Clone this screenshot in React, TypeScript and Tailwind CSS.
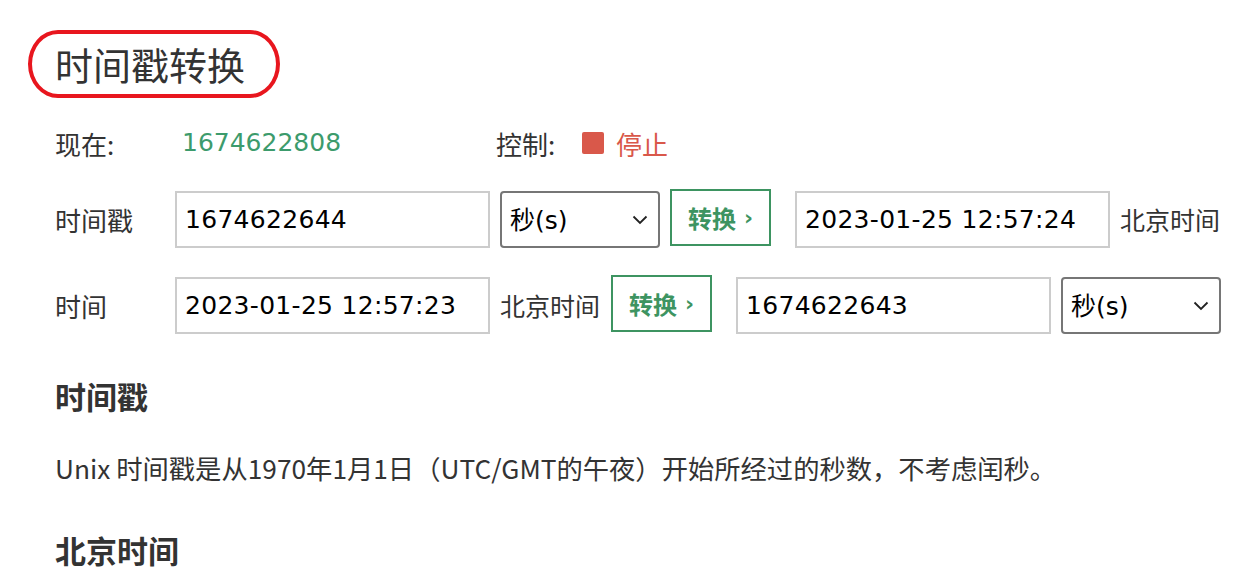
const cjk = "font-['Noto_Sans_CJK_SC',sans-serif]";
const num = "font-['DejaVu_Sans','Noto_Sans_CJK_SC',sans-serif]";

const TextBox = ({ value }: { value: string }) => (
  <div className={`w-[315px] h-[57px] shrink-0 border-2 border-[#cccccc] bg-white flex items-center pl-[8px] text-[25px] tracking-[0.3px] text-black ${num}`}>
    {value}
  </div>
);

const UnitSelect = () => (
  <div className="w-[160px] h-[57px] shrink-0 border-2 border-[#767676] rounded-[4px] bg-white flex items-center justify-between pl-[8px] pr-[10px]">
    <span className={`text-[25px] text-black ${cjk}`}>
      秒<span className={num}>(s)</span>
    </span>
    <svg width="16" height="10" viewBox="0 0 16 10" fill="none">
      <path d="M1.5 1.5L8 8L14.5 1.5" stroke="#222" strokeWidth="1.8" />
    </svg>
  </div>
);

const ConvertButton = () => (
  <button className="w-[101px] h-[57px] shrink-0 mb-[4px] border-2 border-[#3d9461] bg-white flex items-center justify-center gap-[8px] text-[#3d9461] font-bold">
    <span className={`text-[24px] ${cjk}`}>转换</span>
    <span className={`text-[22px] ${num}`}>›</span>
  </button>
);

export default function App() {
  return (
    <div className={`min-h-[578px] bg-white pl-[28px] pt-[30px] text-[#333333] ${cjk}`}>
      {/* page title with hand-drawn red annotation */}
      <div className="inline-flex items-center w-[252px] h-[68px] border-[4px] border-[#e8161e] rounded-[30px/34px] pl-[23px]">
        <h1 className="text-[38px] leading-none font-normal text-[#333333]">时间戳转换</h1>
      </div>

      <div className="pl-[27px]">
        {/* now / control */}
        <div className="flex items-center h-[40px] mt-[25px] text-[26px]">
          <span className="w-[127px]">现在:</span>
          <span className={`w-[314px] text-[25px] text-[#3c9b6c] ${num}`}>1674622808</span>
          <span className="w-[86px]">控制:</span>
          <span className="w-[22px] h-[22px] bg-[#d9584a] rounded-[2px]" />
          <span className="ml-[12px] text-[#d9584a]">停止</span>
        </div>

        {/* timestamp -> time */}
        <div className="flex items-center mt-[26px] text-[26px]">
          <span className="w-[120px]">时间戳</span>
          <TextBox value="1674622644" />
          <div className="ml-[10px]">
            <UnitSelect />
          </div>
          <div className="ml-[10px] flex">
            <ConvertButton />
          </div>
          <div className="ml-[24px]">
            <TextBox value="2023-01-25 12:57:24" />
          </div>
          <span className="ml-[10px] text-[25px]">北京时间</span>
        </div>

        {/* time -> timestamp */}
        <div className="flex items-center mt-[25px] text-[26px]">
          <span className="w-[120px]">时间</span>
          <TextBox value="2023-01-25 12:57:23" />
          <span className="ml-[10px] text-[25px]">北京时间</span>
          <div className="ml-[11px] flex">
            <ConvertButton />
          </div>
          <div className="ml-[24px]">
            <TextBox value="1674622643" />
          </div>
          <div className="ml-[10px]">
            <UnitSelect />
          </div>
        </div>

        <h2 className="mt-[40px] h-[40px] flex items-center text-[31px] font-bold">时间戳</h2>
        <p className="mt-[32px] h-[40px] flex items-center text-[26.3px] whitespace-nowrap">
          Unix 时间戳是从1970年1月1日（UTC/GMT的午夜）开始所经过的秒数，不考虑闰秒。
        </p>
        <h2 className="mt-[42px] h-[40px] flex items-center text-[31px] font-bold">北京时间</h2>
      </div>
    </div>
  );
}
